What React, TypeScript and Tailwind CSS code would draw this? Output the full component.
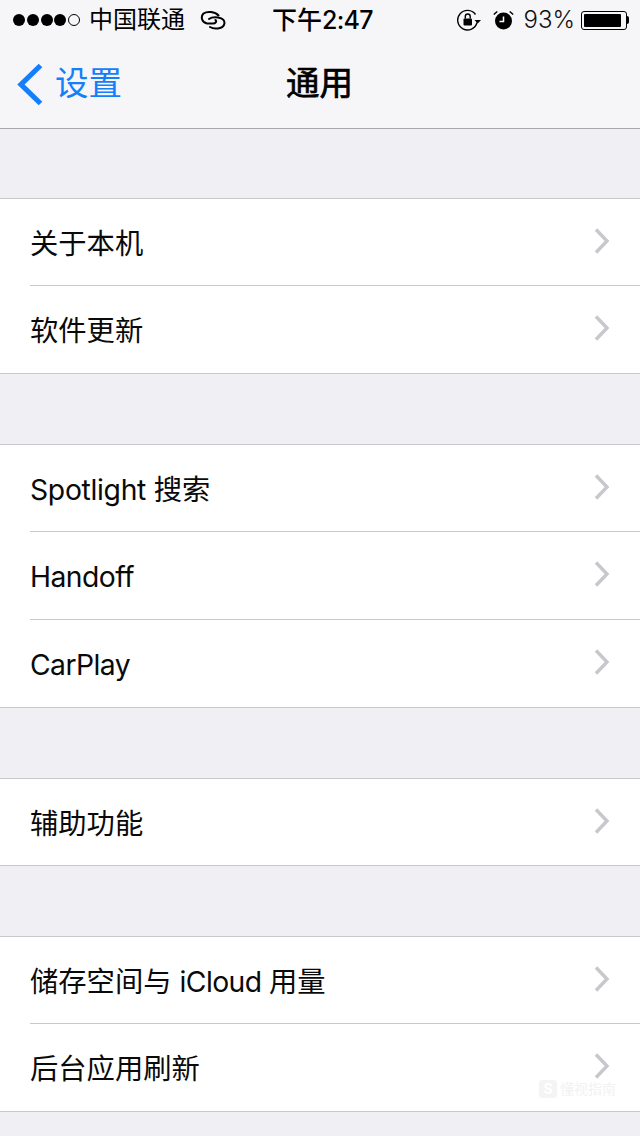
import type { ReactNode } from "react";

const font = { fontFamily: 'Inter,"Noto Sans CJK SC",sans-serif' };

function L({ children }: { children: ReactNode }) {
  return <span className="tracking-[-0.55px]">{children}</span>;
}

function Chevron() {
  return (
    <svg width="16" height="28" viewBox="0 0 16 28" className="mb-[3px] shrink-0">
      <path d="M2 2.5 L13 14 L2 25.5" fill="none" stroke="#c7c7cc" strokeWidth="3.4" />
    </svg>
  );
}

function Row({ label, first, last }: { label: ReactNode; first: boolean; last: boolean }) {
  const h = first && last ? "h-[86px]" : last ? "h-[87px]" : first ? "h-[87px] border-b border-[#c8c7cc]" : "h-[88px] border-b border-[#c8c7cc]";
  return (
    <div className="pl-[30px]">
      <div className={`flex items-center justify-between pr-[30px] ${h}`}>
        <span className="mt-[4px] text-[28.3px] leading-none text-[#0a0a0a]">{label}</span>
        <Chevron />
      </div>
    </div>
  );
}

function Group({ items, top }: { items: ReactNode[]; top: string }) {
  return (
    <div className={`border-y border-[#c8c7cc] bg-white ${top}`}>
      {items.map((t, i) => (
        <Row key={i} label={t} first={i === 0} last={i === items.length - 1} />
      ))}
    </div>
  );
}

function StatusBar() {
  return (
    <div className="relative flex h-[40px] items-center justify-between pl-[13px] pr-[11px] text-black">
      <div className="flex items-center">
        <div className="flex items-center gap-[1.75px]">
          {[0, 1, 2, 3].map((i) => (
            <span key={i} className="h-[12px] w-[12px] rounded-full bg-black" />
          ))}
          <span className="h-[12px] w-[12px] rounded-full border border-black" />
        </div>
        <span className="ml-[9px] text-[24px] leading-none">中国联通</span>
        <svg width="26" height="20" viewBox="0 0 26 20" className="ml-[15px]" fill="none" stroke="#000" strokeWidth="2" strokeLinecap="round">
          <path d="M18.5 5.5 C15 1.5 7 1 3.5 3.5 C0.5 6.5 1.5 12.5 7 13.5 L13 13.5 C15.5 13.5 17 11.5 15.5 10" />
          <path d="M9 9 C11 7.5 14 7 18 7.5 C23 8 25.5 11 24 15 C22 19 14 19.5 10 17" />
        </svg>
      </div>
      <span className="absolute left-[272px] text-[25px] font-medium leading-none">
        下午<span className="tracking-[-0.7px]">2:47</span>
      </span>
      <div className="flex items-center">
        <svg width="24" height="22" viewBox="0 0 24 22" fill="none">
          <path d="M18.5 5.5 A9.8 9.8 0 1 0 20 13.5" stroke="#000" strokeWidth="1.4" />
          <path d="M17.5 11 L24 11 L20.7 14.5 Z" fill="#000" />
          <rect x="6.5" y="9.5" width="8.5" height="7" rx="1" fill="#000" />
          <path d="M8.3 9.5 V7.5 A2.4 2.4 0 0 1 13.2 7.5 V9.5" stroke="#000" strokeWidth="1.4" />
        </svg>
        <svg width="21" height="20" viewBox="0 0 21 20" className="ml-[12px]" fill="none">
          <circle cx="10.5" cy="11" r="8.5" fill="#000" />
          <path d="M10.5 6.5 V11.5 H6.5" stroke="#fff" strokeWidth="1.5" />
          <path d="M0.8 4.5 L4.3 1.5 M20.2 4.5 L16.7 1.5" stroke="#000" strokeWidth="1.5" />
        </svg>
        <span className="ml-[10px] text-[24px] font-light leading-none text-[#111]">93%</span>
        <div className="ml-[6px] flex items-center">
          <div className="h-[19px] w-[46px] rounded-[3px] border border-black p-[2px]">
            <div className="h-full w-[93%] rounded-[1px] bg-black" />
          </div>
          <div className="h-[8px] w-[2px] rounded-r-[2px] bg-black" />
        </div>
      </div>
    </div>
  );
}

export default function App() {
  return (
    <div className="relative h-[1136px] w-[640px] overflow-hidden bg-[#efeff4]" style={font}>
      <div className="relative h-[129px] border-b border-[#a9a9ad] bg-[#f6f6f8]">
        <StatusBar />
        <div className="relative flex h-[88px] items-center justify-center">
          <div className="absolute left-[17px] flex items-center">
            <svg width="27" height="43" viewBox="0 0 27 43" fill="none">
              <path d="M23.5 2.5 L4 21.5 L23.5 40.5" stroke="#157efb" strokeWidth="5.2" />
            </svg>
            <span className="ml-[11px] text-[33.5px] leading-none text-[#157efb]">设置</span>
          </div>
          <span className="mr-[1px] text-[33.5px] leading-none text-black [-webkit-text-stroke:0.7px_#000]">通用</span>
        </div>
      </div>
      <Group top="mt-[69px]" items={["关于本机", "软件更新"]} />
      <Group top="mt-[70px]" items={[<><span className="tracking-[-0.3px]">Spotlight </span>搜索</>, <L>Handoff</L>, <L>CarPlay</L>]} />
      <Group top="mt-[70px]" items={["辅助功能"]} />
      <Group top="mt-[70px]" items={[<>储存空间与 <L>iCloud </L>用量</>, "后台应用刷新"]} />
      <div className="absolute left-[539px] top-[1080px] flex items-center gap-[3px] text-[#f2f2f2]">
        <span className="flex h-[18px] w-[18px] items-center justify-center rounded-[3px] bg-[#f4f4f4] text-[14px] font-bold leading-none text-white">S</span>
        <span className="text-[14px] leading-none">懂视指南</span>
      </div>
    </div>
  );
}
